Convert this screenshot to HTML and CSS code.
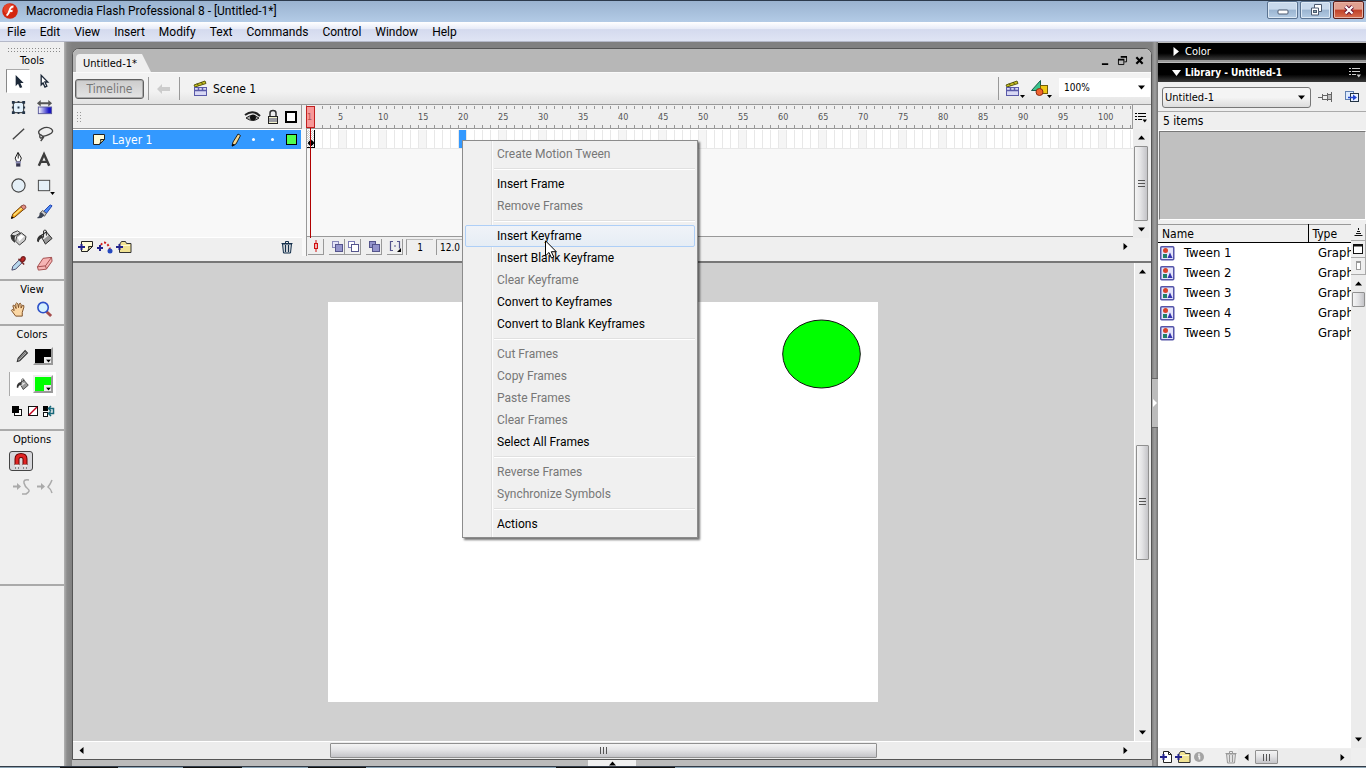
FILE: index.html
```html
<!DOCTYPE html>
<html lang="en">
<head>
    <meta charset="UTF-8">
    <meta name="viewport" content="width=device-width, initial-scale=1.0">
    <title>Macromedia Flash Professional 8 - [Untitled-1*]</title>
    <link rel="stylesheet" href="styles.css">
</head>

<body>
    <!-- Shared icons -->
    <svg class="defs" aria-hidden="true">
        <symbol id="up" viewBox="0 0 7 5"><path d="M0 4.5L3.5 0.5 7 4.5z"/></symbol>
        <symbol id="down" viewBox="0 0 7 5"><path d="M0 0.5L3.5 4.5 7 0.5z"/></symbol>
        <symbol id="left" viewBox="0 0 5 7"><path d="M4.5 0L0.5 3.5 4.5 7z"/></symbol>
        <symbol id="right" viewBox="0 0 5 7"><path d="M0.5 0L4.5 3.5 0.5 7z"/></symbol>
        <symbol id="scene" viewBox="0 0 16 17">
            <path d="M1 5L12 1l1 2.500L2 7z" fill="#c9c220" stroke="#5c5a10"/>
            <path d="M4 3.500l1.500 2M8 2l1.500 2" stroke="#4c4a10"/>
            <rect x="1.500" y="7.500" width="12" height="8" fill="#d8d8f4" stroke="#5a5aa8"/>
            <path d="M1 10.500h13M5.500 8v2M9.500 8v2" stroke="#5a5aa8" stroke-width="1.500"/>
        </symbol>
        <symbol id="list-menu" viewBox="0 0 12 11">
            <path d="M0 1.500h2M0 4.500h2M0 7.500h2M3 1.500h8M3 4.500h8M3 7.500h4" stroke="currentColor"/>
            <path d="M7.500 7.500h4.500l-2.200 3z" fill="currentColor"/>
        </symbol>
        <symbol id="page" viewBox="0 0 14 13">
            <path d="M1.500 1.500h11v5l-5 5h-6z" fill="#fffbd8" stroke="#222"/>
            <path d="M12.500 6.500h-4q1 2-1 5z" fill="#d8d090" stroke="#222"/>
        </symbol>
        <symbol id="folder" viewBox="0 0 16 14">
            <path d="M3.500 4.500l2-3h4l1 2h4.500v9H3.500z" fill="#f1e394" stroke="#333"/>
            <path d="M4 5.500h10" stroke="#fffbd0"/>
            <path d="M0 7h7M3.500 4v6" stroke="#23238c" stroke-width="2"/>
        </symbol>
        <symbol id="trash" viewBox="0 0 12 14">
            <path d="M0.500 3.500h11M4.500 3V1.500h3V3" fill="none" stroke="currentColor"/>
            <path d="M1.500 4h9l-1 9h-7z" fill="currentColor" fill-opacity=".15" stroke="currentColor"/>
            <path d="M4.500 5v7M7.500 5v7" stroke="currentColor"/>
        </symbol>
        <symbol id="bucket" viewBox="0 0 18 18">
            <path d="M5 7L11 3l6 7-7 6z" fill="#999" stroke="#222"/>
            <path d="M6 8l5-4 2 3-5 4z" fill="#eee"/>
            <path d="M8 9V2q1.500-2 3 0v5" fill="none" stroke="#222"/>
            <path d="M6 6Q1 7 1 13l2 1q0-4 5-5z" fill="#333"/>
        </symbol>
        <symbol id="graphic" viewBox="0 0 15 15">
            <rect x="0.750" y="0.750" width="13" height="13" rx="1" fill="#e4e4fa" stroke="#5454a8" stroke-width="1.500"/>
            <circle cx="5.500" cy="4.500" r="2.500" fill="#d8432a"/>
            <rect x="3" y="8" width="4" height="4" fill="#20806a"/>
            <path d="M7.500 12L10 6.500l2.500 5.500z" fill="#3434ac"/>
        </symbol>
    </svg>

    <header class="titlebar">
        <svg class="logo" viewBox="0 0 16 16" width="16" height="16">
            <circle cx="8" cy="8" r="7.800" fill="#d3260f"/>
            <circle cx="6.500" cy="6" r="5" fill="#f0563b" opacity=".6"/>
            <path d="M11.500 3.500Q8.500 3.500 7.500 7.500T4.500 12.500M7.500 8h3" fill="none" stroke="#fff" stroke-width="1.800"/>
        </svg>
        <h1>Macromedia Flash Professional 8 - [Untitled-1*]</h1>
        <div class="window-buttons">
            <button type="button" aria-label="Minimize"><svg viewBox="0 0 12 12" width="12" height="12"><rect x="1" y="6" width="10" height="4" rx="1" fill="#fff" stroke="#4d5b70"/></svg></button>
            <button type="button" aria-label="Restore"><svg viewBox="0 0 12 12" width="12" height="12"><path d="M4.500 0.500h7v7h-3v3.500h-7v-7h3z" fill="#fff" stroke="#4d5b70"/><path d="M4.500 4h4v3.500" fill="none" stroke="#4d5b70"/><rect x="3.500" y="6.500" width="3" height="2" fill="#8aa" stroke="#4d5b70"/></svg></button>
            <button type="button" class="close" aria-label="Close"><svg viewBox="0 0 12 12" width="12" height="12"><path d="M2.500 2.500l7 7M9.500 2.500l-7 7" stroke="#613" stroke-width="4"/><path d="M2.500 2.500l7 7M9.500 2.500l-7 7" stroke="#fff" stroke-width="2.200"/></svg></button>
        </div>
    </header>

    <nav class="menubar">
        <ul>
            <li><a href="#file">File</a></li>
            <li><a href="#edit">Edit</a></li>
            <li><a href="#view">View</a></li>
            <li><a href="#insert">Insert</a></li>
            <li><a href="#modify">Modify</a></li>
            <li><a href="#text">Text</a></li>
            <li><a href="#commands">Commands</a></li>
            <li><a href="#control">Control</a></li>
            <li><a href="#window">Window</a></li>
            <li><a href="#help">Help</a></li>
        </ul>
    </nav>

    <div class="workspace">
        <!-- Tools -->
        <aside class="tools">
            <div class="grip"></div>
            <section class="tool-section main-tools">
                <h2>Tools</h2>
                <div class="tool-grid">
                    <button type="button" class="selected" aria-label="Selection"><svg viewBox="0 0 18 18"><path d="M6 2v12l2.500-2.500 2 4.500 2.500-1-2-4.500h3.500z" fill="#1c2838"/></svg></button>
                    <button type="button" aria-label="Subselection"><svg viewBox="0 0 18 18"><path d="M5.500 2.500v10l2-2 2 4.500 2-1-2-4.500h3z" fill="#fff" stroke="#1c2838" stroke-width="1.400"/></svg></button>
                    <button type="button" aria-label="Free Transform"><svg viewBox="0 0 18 18"><rect x="3.500" y="3.500" width="11" height="11" fill="#e2f1fc" stroke="#222"/><path d="M2 2h3v3H2zM13 2h3v3h-3zM2 13h3v3H2zM13 13h3v3h-3zM8 2h2v2H8zM8 14h2v2H8zM2 8h2v2H2zM14 8h2v2h-2zM8 8h2v2H8z" fill="#24364a"/></svg></button>
                    <button type="button" aria-label="Gradient Transform"><svg viewBox="0 0 18 18"><defs><linearGradient id="blue"><stop offset="0" stop-color="#fff"/><stop offset=".8" stop-color="#1a16c4"/></linearGradient></defs><rect x="2.500" y="8.500" width="14" height="7" fill="url(#blue)" stroke="#5a5a9c"/><path d="M1 4.500l4-3.500v2.500h8V1l4 3.500L13 8V5.500H5V8z" fill="#555"/></svg></button>
                    <button type="button" aria-label="Line"><svg viewBox="0 0 18 18"><path d="M3 15L15 4" stroke="#444" stroke-width="1.500"/></svg></button>
                    <button type="button" aria-label="Lasso"><svg viewBox="0 0 18 18"><path d="M5 11Q0 7 6 4t10 0-2 6-8 1-2 1 3 1-2 4" fill="none" stroke="#444" stroke-width="1.500"/></svg></button>
                    <button type="button" aria-label="Pen"><svg viewBox="0 0 18 18"><path d="M8.500 1.500L5.500 7.500l1.500 4h3.500l1.500-4z" fill="#fff" stroke="#111"/><path d="M8.700 2v6" stroke="#111"/><rect x="6" y="11" width="5.500" height="2" fill="#8b8bb8"/><path d="M6.500 13h4.500v3.500H6.500z" fill="#34344e"/></svg></button>
                    <button type="button" aria-label="Text"><svg viewBox="0 0 18 18"><path d="M3 15.500L8.500 3.500l5.500 12M5 11.500h7" fill="none" stroke="#3d3d3d" stroke-width="2.600"/></svg></button>
                    <button type="button" aria-label="Oval"><svg viewBox="0 0 18 18"><circle cx="9" cy="9" r="7" fill="#e4eff7" stroke="#444" stroke-width="1.200"/></svg></button>
                    <button type="button" aria-label="Rectangle"><svg viewBox="0 0 18 18"><rect x="2.500" y="3.500" width="12" height="11" fill="#e4eff7" stroke="#444"/><path d="M15 16h5l-2.500 3z"/></svg></button>
                    <button type="button" aria-label="Pencil"><svg viewBox="0 0 18 18"><path d="M1.500 16l1.500-4.500L12.500 3l3 3L5 15z" fill="#f3a81c" stroke="#6a3a0c"/><path d="M4 13l9-8" stroke="#ffe480" stroke-width="1.500"/><path d="M11.500 4l3 3L17 5q0-3-3-3z" fill="#e09080" stroke="#844"/><path d="M1 17l1-3 2 2z"/></svg></button>
                    <button type="button" aria-label="Brush"><svg viewBox="0 0 18 18"><path d="M8 9l7-7 2 1-6 8z" fill="#4c8cf4" stroke="#1c3cac"/><path d="M7 8l4 3-2 3-5-3z" fill="#ccc" stroke="#555"/><path d="M6 10l3 3q-3 4-8 3 3-2 3-5z" fill="#3c4454"/></svg></button>
                    <button type="button" aria-label="Ink Bottle"><svg viewBox="0 0 18 18"><path d="M7 8l5-4 5 4-1 4-6 5-4-4z" fill="#ccc" stroke="#333"/><path d="M8 9l4-3 3 2-5 5z" fill="#fff"/><path d="M3 4l5-2 3 2-5 3q-3 1-1 7-4-2-4-7z" fill="#ddd" stroke="#333"/><path d="M1 6q0 5 4 8-1-5 1-7z" fill="#333"/></svg></button>
                    <button type="button" aria-label="Paint Bucket"><svg viewBox="0 0 18 18"><use href="#bucket"/></svg></button>
                    <button type="button" aria-label="Eyedropper"><svg viewBox="0 0 18 18"><path d="M2 16l1-4 7-7 3 3-7 7z" fill="#b8d8ee" stroke="#446"/><path d="M9 4l6 6M11 6q1-5 4-4 3 2-2 6z" fill="#c42424" stroke="#722" stroke-width="1.500"/></svg></button>
                    <button type="button" aria-label="Eraser"><svg viewBox="0 0 18 18"><path d="M1.500 12.500l6-9 9-1 .5 4-6 8.500-8.500 1z" fill="#f6b4b4" stroke="#a04a4a"/><path d="M1.500 12.500l8.500-1 6.500-9M10 11.500l1 3" fill="none" stroke="#a04a4a"/></svg></button>
                </div>
            </section>
            <section class="tool-section view-tools">
                <h2>View</h2>
                <div class="tool-grid">
                    <button type="button" aria-label="Hand"><svg viewBox="0 0 18 18"><path d="M6 16L1.500 10q0-2 3 0L3 5q1-2 2.500 1l1 2-.5-5q1-2 2.300 0l.7 4 .7-4q1.500-1.500 2 .5v4l1.500-3q2-.5 1.500 2L13 12v4z" fill="#fbd7a4" stroke="#7a4a20"/></svg></button>
                    <button type="button" aria-label="Zoom"><svg viewBox="0 0 18 18"><path d="M11 11l5 5" stroke="#a44c4c" stroke-width="3"/><circle cx="7.500" cy="7" r="5.500" fill="#d4f0ff" stroke="#2c50c8" stroke-width="1.700"/></svg></button>
                </div>
            </section>
            <section class="tool-section colors">
                <h2>Colors</h2>
                <div class="color-row">
                    <svg viewBox="0 0 18 18" width="14" height="14"><path d="M3 16l1-4 9-10 3 3L6 15z" fill="#bbb" stroke="#333" stroke-width="1.400"/><path d="M5 13l9-9" stroke="#666"/></svg>
                    <button type="button" class="swatch black" aria-label="Stroke color"><svg viewBox="0 0 7 5" width="5" height="4"><use href="#down"/></svg></button>
                </div>
                <div class="color-row active">
                    <svg viewBox="0 0 18 18" width="13" height="13"><use href="#bucket"/></svg>
                    <button type="button" class="swatch green" aria-label="Fill color"><svg viewBox="0 0 7 5" width="5" height="4"><use href="#down"/></svg></button>
                </div>
                <div class="color-actions">
                    <button type="button" aria-label="Black and white"><svg viewBox="0 0 12 12"><rect x="3.500" y="4.500" width="7" height="6" fill="#fff" stroke="#111"/><rect x="1" y="1" width="7" height="7"/></svg></button>
                    <button type="button" aria-label="No color"><svg viewBox="0 0 12 12"><rect x="1.500" y="1.500" width="9" height="9" fill="#fff" stroke="#111"/><path d="M2 10l8-8" stroke="#c4001c" stroke-width="1.500"/></svg></button>
                    <button type="button" aria-label="Swap colors"><svg viewBox="0 0 12 12"><rect x="0" y="1" width="5" height="5"/><rect x="0.500" y="7.500" width="4" height="4" fill="#fff" stroke="#111"/><path d="M6 3.500h4.500v5H6M8 1L5.500 3.500 8 6M8 6L5.500 8.500 8 11" fill="none" stroke="#18687a" stroke-width="1.500"/></svg></button>
                </div>
            </section>
            <section class="tool-section options">
                <h2>Options</h2>
                <button type="button" class="magnet" aria-label="Snap to Objects"><svg viewBox="0 0 16 16" width="16" height="16"><path d="M4 12V6q0-3.500 4-3.500T12 6v6" fill="none" stroke="#600" stroke-width="5"/><path d="M4 11V6q0-3.500 4-3.500T12 6v5" fill="none" stroke="#e02424" stroke-width="3"/><path d="M2 12.500h4M10 12.500h4" stroke="#eee" stroke-width="2"/><path d="M2 15h1M5 15h1M10 15h1M13 15h1" stroke="#333"/></svg></button>
                <div class="option-icons">
                    <svg viewBox="0 0 18 18" width="18" height="18"><path d="M0 8.500h5" stroke="#aaa" stroke-width="2"/><path d="M4 5l4 3.500L4 12z" fill="#aaa"/><path d="M16 2q-6-1-5 3t4 6-2 5H9" fill="none" stroke="#aaa" stroke-width="1.500"/></svg>
                    <svg viewBox="0 0 18 18" width="18" height="18"><path d="M0 8.500h5" stroke="#aaa" stroke-width="2"/><path d="M4 5l4 3.500L4 12z" fill="#aaa"/><path d="M15 2q-1 3-4 7 3 2 4 6" fill="none" stroke="#aaa" stroke-width="1.500"/></svg>
                </div>
            </section>
            <div class="tools-rest"></div>
        </aside>

        <!-- Document window -->
        <main class="center">
            <div class="document">
                <div class="tabbar">
                    <div class="tab">Untitled-1*</div>
                    <div class="doc-buttons">
                        <button type="button" aria-label="Minimize document"><svg viewBox="0 0 10 10"><path d="M1 9h7" stroke="#000" stroke-width="2"/></svg></button>
                        <button type="button" aria-label="Restore document"><svg viewBox="0 0 10 10"><path d="M3 1h7M0 4h7" stroke="#000" stroke-width="2"/><path d="M9.500 1v5.500H7M0.500 4v5.500h6V4" fill="none" stroke="#000"/></svg></button>
                        <button type="button" aria-label="Close document"><svg viewBox="0 0 10 10"><path d="M1.500 1.500l7 7M8.500 1.500l-7 7" stroke="#000" stroke-width="2.400"/></svg></button>
                    </div>
                </div>

                <div class="editbar">
                    <button type="button" class="timeline-toggle">Timeline</button>
                    <span class="divider"></span>
                    <button type="button" class="back" aria-label="Back"><svg viewBox="0 0 13 10" width="13" height="10"><path d="M0 5l5-5v3h8v4H5v3z" fill="#ccc"/></svg></button>
                    <span class="divider"></span>
                    <svg class="scene-icon" width="16" height="17"><use href="#scene"/></svg>
                    <span class="scene-name">Scene 1</span>
                    <div class="edit-right">
                        <span class="divider"></span>
                        <button type="button" aria-label="Edit Scene"><svg viewBox="0 0 20 18" width="20" height="18"><use href="#scene" width="16" height="17"/><path d="M15 15h5l-2.500 3z"/></svg></button>
                        <button type="button" aria-label="Edit Symbols"><svg viewBox="0 0 22 18" width="22" height="18"><path d="M0.500 10.500L9.500 0.500v10z" fill="#3cc48c" stroke="#145c4c"/><rect x="9.500" y="5.500" width="7" height="8" fill="#f0c814" stroke="#705c0c"/><circle cx="8.500" cy="12" r="3.500" fill="#f06430" stroke="#8c2c10"/><path d="M16 15h5l-2.500 3z"/></svg></button>
                        <div class="zoom-box">
                            <select aria-label="Zoom"><option>100%</option></select>
                            <svg width="7" height="5"><use href="#down"/></svg>
                        </div>
                    </div>
                </div>

                <!-- Timeline -->
                <section class="timeline">
                    <div class="layers">
                        <div class="layers-head">
                            <span class="dots"></span>
                            <svg viewBox="0 0 16 12" width="16" height="12"><path d="M0 4Q8-2 15 5" fill="none" stroke="#222" stroke-width="2"/><path d="M1 7q6-5 13 0-6 5-13 0z" fill="#aaa" stroke="#222"/><circle cx="8" cy="6.500" r="3" fill="#111"/></svg>
                            <svg viewBox="0 0 12 14" width="12" height="14"><path d="M3 7V3q0-2.500 3-2.500T9 3v4" fill="none" stroke="#333" stroke-width="1.500"/><rect x="1.500" y="6.500" width="9" height="7" fill="#f2f2cc" stroke="#222"/><path d="M2 9h8M2 11h8" stroke="#447"/></svg>
                            <svg viewBox="0 0 12 12" width="12" height="12"><rect x="1" y="1" width="10" height="10" fill="#fff" stroke="#000" stroke-width="2"/></svg>
                        </div>
                        <div class="layer">
                            <svg width="14" height="13"><use href="#page"/></svg>
                            <span class="layer-name">Layer 1</span>
                            <svg viewBox="0 0 10 14" width="10" height="14"><path d="M1 13l1-4 5-8 2.500 1.500L5 11z" fill="#f4d890" stroke="#222"/><path d="M1 13.500l.5-3L4 12z"/></svg>
                            <span class="dot"></span>
                            <span class="dot"></span>
                            <span class="outline"></span>
                        </div>
                        <div class="layers-foot">
                            <button type="button" aria-label="Insert Layer"><svg viewBox="0 0 16 14" width="16" height="14"><use href="#page" x="2" width="14" height="13"/><path d="M0 7h7M3.500 4v6" stroke="#23238c" stroke-width="2"/></svg></button>
                            <button type="button" aria-label="Add Motion Guide"><svg viewBox="0 0 16 14" width="16" height="14"><path d="M4 5q3-5 7 0l2 4" fill="none" stroke="#d02020" stroke-width="2" stroke-dasharray="2 2"/><path d="M0 8h6M3 5v6" stroke="#23238c" stroke-width="2"/><circle cx="13" cy="11" r="2.500" fill="#2448c0"/></svg></button>
                            <button type="button" aria-label="Insert Layer Folder"><svg width="16" height="14"><use href="#folder"/></svg></button>
                            <button type="button" class="delete" aria-label="Delete Layer"><svg width="12" height="14"><use href="#trash"/></svg></button>
                        </div>
                    </div>

                    <div class="frames">
                        <div class="ruler">
                            <span class="first">1</span>
                            <span>5</span><span>10</span><span>15</span><span>20</span><span>25</span>
                            <span>30</span><span>35</span><span>40</span><span>45</span><span>50</span>
                            <span>55</span><span>60</span><span>65</span><span>70</span><span>75</span>
                            <span>80</span><span>85</span><span>90</span><span>95</span><span>100</span>
                            <div class="playhead"></div>
                        </div>
                        <div class="frame-row">
                            <div class="keyframe"></div>
                            <div class="frame-selected"></div>
                        </div>
                        <div class="frame-space"></div>
                        <div class="frames-foot">
                            <button type="button" aria-label="Center Frame"><svg viewBox="0 0 12 12"><path d="M6 0v12" stroke="#d01010"/><rect x="4.500" y="3.500" width="3" height="5" fill="#f4b0b0" stroke="#d01010"/></svg></button>
                            <button type="button" class="gap" aria-label="Onion Skin"><svg viewBox="0 0 12 12"><rect x="1.500" y="1.500" width="6" height="6" fill="#e4e4f8" stroke="#8888b8"/><rect x="4.500" y="4.500" width="7" height="7" fill="#9494cc" stroke="#55558c"/></svg></button>
                            <button type="button" aria-label="Onion Skin Outlines"><svg viewBox="0 0 12 12"><rect x="1.500" y="1.500" width="6" height="6" fill="#fff" stroke="#7878b4"/><rect x="4.500" y="4.500" width="7" height="7" fill="#fff" stroke="#55558c"/></svg></button>
                            <button type="button" class="gap" aria-label="Edit Multiple Frames"><svg viewBox="0 0 12 12"><rect x="1.500" y="1.500" width="6" height="6" fill="#9494cc" stroke="#55558c"/><rect x="4.500" y="4.500" width="7" height="7" fill="#9494cc" stroke="#55558c"/></svg></button>
                            <button type="button" class="gap" aria-label="Modify Onion Markers"><svg viewBox="0 0 12 12"><path d="M4 1.500H1.500v9H4M8 1.500h2.500v7M5 6h2" fill="none" stroke="#55558c" stroke-width="1.200"/><path d="M8 12h4V8z"/></svg></button>
                            <span class="field current">1</span>
                            <span class="field">12.0</span>
                            <button type="button" class="foot-arrow" aria-label="Scroll frames right"><svg width="5" height="7"><use href="#right"/></svg></button>
                        </div>
                    </div>

                    <div class="timeline-side">
                        <button type="button" class="frame-view" aria-label="Frame View"><svg width="12" height="11"><use href="#list-menu"/></svg></button>
                        <div class="vscroll">
                            <button type="button" aria-label="Scroll layers up"><svg width="7" height="5"><use href="#up"/></svg></button>
                            <div class="thumb full"></div>
                            <button type="button" aria-label="Scroll layers down"><svg width="7" height="5"><use href="#down"/></svg></button>
                        </div>
                    </div>
                </section>

                <!-- Stage -->
                <section class="stage-area">
                    <div class="pasteboard">
                        <div class="stage">
                            <svg viewBox="0 0 550 400" width="550" height="400"><ellipse cx="493.500" cy="52" rx="38.800" ry="34" fill="#0f0" stroke="#111"/></svg>
                        </div>
                    </div>
                    <div class="vscroll stage-v">
                        <button type="button" aria-label="Scroll up"><svg width="7" height="5"><use href="#up"/></svg></button>
                        <div class="before"></div>
                        <div class="thumb"></div>
                        <div class="after"></div>
                        <button type="button" aria-label="Scroll down"><svg width="7" height="5"><use href="#down"/></svg></button>
                    </div>
                    <div class="hscroll stage-h">
                        <button type="button" aria-label="Scroll left"><svg width="5" height="7"><use href="#left"/></svg></button>
                        <div class="before"></div>
                        <div class="thumb"></div>
                        <div class="after"></div>
                        <button type="button" aria-label="Scroll right"><svg width="5" height="7"><use href="#right"/></svg></button>
                    </div>
                </section>
            </div>
            <div class="bottom-gutter">
                <button type="button" aria-label="Show bottom panels"><svg width="7" height="5"><use href="#up"/></svg></button>
            </div>
        </main>

        <div class="splitter">
            <button type="button" aria-label="Hide side panels"><svg viewBox="0 0 5 8" width="5" height="8"><path d="M0 0l4 4-4 4z"/></svg></button>
        </div>

        <!-- Panels -->
        <aside class="panels">
            <button type="button" class="panel-head"><svg width="6" height="9" viewBox="0 0 6 9"><path d="M0.500 0l5.500 4.500-5.500 4.500z"/></svg>Color</button>
            <div class="panel-head open">
                <button type="button"><svg width="9" height="6" viewBox="0 0 9 6"><path d="M0 0h9L4.500 6z"/></svg>Library - Untitled-1</button>
                <svg class="head-menu" width="12" height="11"><use href="#list-menu"/></svg>
            </div>
            <div class="library-pick">
                <div class="pick-box">
                    <select aria-label="Library document"><option>Untitled-1</option></select>
                    <svg width="7" height="5"><use href="#down"/></svg>
                </div>
                <button type="button" aria-label="Pin current library"><svg viewBox="0 0 14 12" width="14" height="12"><path d="M0 6.500h4M4.500 3v6M13.500 1v10M9.500 2v8M5 4.500h4M5 8.500h4M10 3.500h3M10 8.500h3" fill="none" stroke="#666"/><rect x="10" y="4" width="3" height="4" fill="#bbb"/></svg></button>
                <button type="button" aria-label="New library panel"><svg viewBox="0 0 14 12" width="14" height="12"><rect x="0.500" y="0.500" width="8" height="8" fill="#dceaff" stroke="#6080b0"/><rect x="5.500" y="2.500" width="8" height="8" fill="#e8f0ff" stroke="#234"/><path d="M3 6.500h7" stroke="#2044d0" stroke-width="1.500"/><path d="M8 3.500l4 3-4 3z" fill="#2044d0"/></svg></button>
            </div>
            <p class="item-count">5 items</p>
            <div class="preview"></div>
            <div class="library">
                <div class="library-list">
                    <table>
                        <thead>
                            <tr><th class="name">Name</th><th>Type</th></tr>
                        </thead>
                        <tbody>
                            <tr><td><svg width="15" height="15"><use href="#graphic"/></svg>Tween 1</td><td>Graph</td></tr>
                            <tr><td><svg width="15" height="15"><use href="#graphic"/></svg>Tween 2</td><td>Graph</td></tr>
                            <tr><td><svg width="15" height="15"><use href="#graphic"/></svg>Tween 3</td><td>Graph</td></tr>
                            <tr><td><svg width="15" height="15"><use href="#graphic"/></svg>Tween 4</td><td>Graph</td></tr>
                            <tr><td><svg width="15" height="15"><use href="#graphic"/></svg>Tween 5</td><td>Graph</td></tr>
                        </tbody>
                    </table>
                </div>
                <div class="library-side">
                    <button type="button" class="side-button" aria-label="Sort order"><svg viewBox="0 0 9 8" width="9" height="8"><path d="M4.500 0v2M3 3.500h3M2 5.500h5M0.500 7.500h8" stroke="#111"/></svg></button>
                    <button type="button" class="side-button" aria-label="Wide view"><svg viewBox="0 0 10 10" width="10" height="10"><rect x="0.500" y="0.500" width="9" height="9" fill="#fff" stroke="#111"/><path d="M0 1.500h10" stroke="#111" stroke-width="2"/></svg></button>
                    <button type="button" class="side-button" aria-label="Narrow view"><svg viewBox="0 0 10 10" width="10" height="10"><rect x="3.500" y="0.500" width="4" height="8" fill="#fff" stroke="#999"/><path d="M3 1.500h5" stroke="#999"/></svg></button>
                    <div class="vscroll">
                        <button type="button" aria-label="Scroll list up"><svg width="7" height="5"><use href="#up"/></svg></button>
                        <div class="thumb small"></div>
                        <div class="after"></div>
                        <button type="button" aria-label="Scroll list down"><svg width="7" height="5"><use href="#down"/></svg></button>
                    </div>
                </div>
            </div>
            <div class="library-foot">
                <button type="button" aria-label="New Symbol"><svg viewBox="0 0 12 14" width="12" height="14"><path d="M3.500 1.500h5l3 3v8h-8z" fill="#fff" stroke="#222"/><path d="M8.500 1.500v3h3" fill="none" stroke="#222"/><path d="M0 7h7M3.500 4v6" stroke="#23238c" stroke-width="2"/></svg></button>
                <button type="button" aria-label="New Folder"><svg width="16" height="14"><use href="#folder"/></svg></button>
                <button type="button" aria-label="Properties"><svg viewBox="0 0 10 12" width="10" height="12"><circle cx="5" cy="6" r="5" fill="#a4a4a4"/><path d="M5 2.500v2M4 5.500h1.500v3" fill="none" stroke="#eee" stroke-width="1.500"/></svg></button>
                <button type="button" class="delete" aria-label="Delete"><svg width="12" height="14"><use href="#trash"/></svg></button>
                <div class="hscroll">
                    <button type="button" aria-label="Scroll list left"><svg width="5" height="7"><use href="#left"/></svg></button>
                    <div class="thumb small"></div>
                    <div class="after"></div>
                    <button type="button" aria-label="Scroll list right"><svg width="5" height="7"><use href="#right"/></svg></button>
                </div>
            </div>
        </aside>
    </div>

    <div class="taskbar"></div>

    <!-- Frame context menu -->
    <div class="context-menu" role="menu">
        <button type="button" role="menuitem" disabled>Create Motion Tween</button>
        <hr>
        <button type="button" role="menuitem">Insert Frame</button>
        <button type="button" role="menuitem" disabled>Remove Frames</button>
        <hr>
        <button type="button" role="menuitem" class="hover">Insert Keyframe</button>
        <button type="button" role="menuitem">Insert Blank Keyframe</button>
        <button type="button" role="menuitem" disabled>Clear Keyframe</button>
        <button type="button" role="menuitem">Convert to Keyframes</button>
        <button type="button" role="menuitem">Convert to Blank Keyframes</button>
        <hr>
        <button type="button" role="menuitem" disabled>Cut Frames</button>
        <button type="button" role="menuitem" disabled>Copy Frames</button>
        <button type="button" role="menuitem" disabled>Paste Frames</button>
        <button type="button" role="menuitem" disabled>Clear Frames</button>
        <button type="button" role="menuitem">Select All Frames</button>
        <hr>
        <button type="button" role="menuitem" disabled>Reverse Frames</button>
        <button type="button" role="menuitem" disabled>Synchronize Symbols</button>
        <hr>
        <button type="button" role="menuitem">Actions</button>
    </div>
    <svg class="cursor" viewBox="0 0 12 19" width="12" height="19"><path d="M0.500 0.800v15l3.500-3.300 2.500 5.500 2.300-1-2.500-5.300h5z" fill="#fff" stroke="#000"/></svg>
</body>
</html>
```

FILE: styles.css
```css
* {
    box-sizing: border-box;
}

body {
    margin: 0;
    height: 100vh;
    display: flex;
    flex-direction: column;
    overflow: hidden;
    background: #808080;
    color: #000;
    font-family: "DejaVu Sans Condensed", "DejaVu Sans", sans-serif;
    font-size: 12px;
}

button, select {
    font: inherit;
    color: inherit;
    margin: 0;
    padding: 0;
    border: none;
    border-radius: 0;
    background: none;
}

svg {
    display: block;
    flex: none;
    overflow: visible;
}

.defs {
    position: absolute;
    width: 0;
    height: 0;
}

h1, h2, p, ul {
    margin: 0;
    padding: 0;
    font-weight: normal;
}

/* Title bar */
.titlebar {
    display: flex;
    align-items: center;
    flex: none;
    height: 22px;
    padding: 0 2px 2px;
    border-top: 1px solid #2c3a4c;
    background: linear-gradient(#9ab3d0, #b3cbe6);
}

.titlebar h1 {
    flex: 1;
    margin-left: 8px;
    font-family: Roboto, sans-serif;
    font-size: 12px;
}

.window-buttons {
    display: flex;
    align-self: flex-start;
    gap: 2px;
}

.window-buttons button {
    display: flex;
    align-items: center;
    justify-content: center;
    width: 31px;
    height: 18px;
    border: 1px solid #5a7391;
    border-radius: 2px;
    background: linear-gradient(#c8d9ec 45%, #9ab4d0 50%, #b4cce4);
    box-shadow: inset 0 0 0 1px #dce8f4;
}

.window-buttons .close {
    border-color: #5c1f1a;
    background: linear-gradient(#e0a090 45%, #c04028 50%, #d87050);
    box-shadow: inset 0 0 0 1px #e8b4a8;
}

/* Menu bar */
.menubar {
    flex: none;
    height: 20px;
    border-bottom: 1px solid #b4b8c8;
    background: linear-gradient(#fff 0, #e8ecf8 35%, #d4daee 40%, #dfe4f4);
    font-family: Roboto, sans-serif;
}

.menubar ul {
    display: flex;
    list-style-type: none;
    gap: 14px;
    padding-left: 7px;
    line-height: 20px;
}

.menubar a {
    color: #000;
    text-decoration: none;
}

.workspace {
    display: flex;
    flex: 1;
    min-height: 0;
}

/* Tools */
.tools {
    display: flex;
    flex-direction: column;
    flex: none;
    width: 64px;
    padding-top: 5px;
    background: #efefef;
}

.grip {
    height: 5px;
    margin: 0 4px 0 7px;
    background: radial-gradient(circle, #888 0.7px, transparent 1px) 0 0 / 3px 3px;
}

.tool-section {
    padding-bottom: 3px;
    border-bottom: 2px solid #aaa;
}

.tool-section h2 {
    height: 18px;
    font-size: 11px;
    line-height: 18px;
    text-align: center;
}

.main-tools h2 {
    height: 16px;
}

.tool-grid {
    display: grid;
    grid-template-columns: 26px 26px;
    justify-content: center;
}

.tool-grid button {
    display: flex;
    align-items: center;
    justify-content: center;
    width: 24px;
    height: 26px;
}

.tool-grid svg {
    width: 17px;
    height: 17px;
}

.tool-grid .selected {
    align-self: center;
    height: 24px;
    border: 1px solid #fff;
    border-left-color: #888;
    border-top-color: #aaa;
    background: #fff;
}

.view-tools .tool-grid button {
    height: 20px;
}

.view-tools {
    padding-bottom: 5px;
}

.colors {
    padding-bottom: 12px;
}

.color-row {
    display: flex;
    align-items: center;
    justify-content: space-between;
    height: 24px;
    margin: 0 8px 4px 9px;
    padding: 0 3px 0 6px;
}

.color-row.active {
    background: #fff;
    border-left: 1px solid #aaa;
}

.swatch {
    display: flex;
    align-items: flex-end;
    justify-content: flex-end;
    width: 20px;
    height: 18px;
    border: 2px solid #eee;
    border-right-color: #999;
    border-bottom-color: #999;
}

.swatch.black {
    background: #000;
}

.swatch.green {
    background: #0f0;
}

.swatch svg {
    box-sizing: content-box;
    padding: 2px 0 0 2px;
    background: #eee;
}

.color-actions {
    display: flex;
    gap: 4px;
    margin-top: 9px;
    padding-left: 11px;
}

.color-actions svg {
    width: 12px;
    height: 12px;
}

.options {
    padding-bottom: 88px;
}

.magnet {
    display: flex;
    align-items: center;
    justify-content: center;
    width: 24px;
    height: 20px;
    margin: 2px 0 0 9px;
    border: 1px solid #444;
    border-radius: 3px;
    background: #d8d8dc;
}

.option-icons {
    display: flex;
    gap: 6px;
    margin-top: 7px;
    padding-left: 13px;
}

.tools-rest {
    flex: 1;
}

/* Document window */
.center {
    display: flex;
    flex-direction: column;
    flex: 1;
    min-width: 0;
    padding: 6px 0 0 8px;
    background: linear-gradient(90deg, #b4b4b4 0, #8c8c8c 3px, #808080 8px);
}

.document {
    position: relative;
    z-index: 0;
    display: flex;
    flex-direction: column;
    flex: 1;
    min-height: 0;
    border: 1px solid #555;
    border-radius: 7px 7px 0 0;
    background: #efefef;
    overflow: hidden;
}

.tabbar {
    display: flex;
    align-items: flex-end;
    justify-content: space-between;
    flex: none;
    height: 24px;
    padding: 0 7px 0 3px;
    border-bottom: 1px solid #fafafa;
    background: #b7b7b7;
}

.tab {
    height: 18px;
    padding: 0 14px 0 7px;
    border-radius: 4px 0 0 0;
    background: #efefef;
    clip-path: polygon(0 0, 66px 0, 100% 100%, 0 100%);
    font-size: 11px;
    line-height: 20px;
}

.doc-buttons {
    display: flex;
    gap: 8px;
    padding-bottom: 7px;
}

.doc-buttons svg {
    width: 9px;
    height: 9px;
}

.editbar {
    display: flex;
    align-items: center;
    flex: none;
    height: 32px;
    padding-left: 2px;
    border-bottom: 1px solid #999;
    background: linear-gradient(#f2f2f2 60%, #e2e2e2);
}

.timeline-toggle {
    width: 69px;
    height: 20px;
    border: 1px solid #606060;
    border-radius: 3px;
    background: linear-gradient(#ccc, #e4e4e4);
    box-shadow: inset 0 0 0 1px #aaa;
    color: #777;
}

.divider {
    width: 1px;
    height: 23px;
    margin: 0 4px;
    background: #999;
}

.back {
    margin: 0 5px 0 4px;
}

.scene-icon {
    margin: 0 4px 0 9px;
}

.edit-right {
    display: flex;
    align-items: center;
    gap: 6px;
    margin-left: auto;
    padding-right: 1px;
}

.edit-right .divider {
    margin: 0;
}

.zoom-box, .pick-box {
    position: relative;
    display: flex;
    align-items: center;
}

.zoom-box select, .pick-box select {
    appearance: none;
    width: 100%;
    height: 100%;
    padding-left: 5px;
}

.zoom-box svg, .pick-box svg {
    position: absolute;
    right: 5px;
    pointer-events: none;
}

.zoom-box {
    width: 91px;
    height: 19px;
    margin-bottom: 3px;
    background: #fff;
    font-size: 10px;
}

/* Timeline */
.timeline {
    position: relative;
    z-index: 0;
    display: grid;
    grid-template-columns: 234px 1fr 18px;
    flex: none;
    height: 158px;
    border-bottom: 2px solid #777;
}

.layers {
    display: flex;
    flex-direction: column;
    margin-bottom: 5px;
    padding-right: 4px;
    border-right: 1px solid #999;
    background: linear-gradient(#efefef 24px, #f8f8f8 24px);
}

.layers-head {
    display: flex;
    align-items: center;
    justify-content: flex-end;
    gap: 6px;
    height: 24px;
    padding: 0 4px 0 3px;
    border-bottom: 1px solid #999;
    border-right: 1px solid #999;
}

.dots {
    width: 6px;
    height: 11px;
    margin-right: auto;
    background: radial-gradient(circle, #999 0.7px, transparent 1px) 0 0 / 3px 3px;
}

.layer {
    display: flex;
    align-items: center;
    height: 20px;
    margin-right: 1px;
    padding: 0 4px 0 19px;
    border-top: 1px solid #fff;
    background: #3399ff;
    color: #fff;
}

.layer-name {
    flex: 1;
    margin-left: 6px;
}

.dot {
    width: 3px;
    height: 3px;
    margin-left: 11px;
    border-radius: 50%;
    background: #fff;
}

.dot + .dot {
    margin-left: 16px;
}

.outline {
    width: 11px;
    height: 11px;
    margin-left: 12px;
    border: 1px solid #000;
    background: #4fff4f;
}

.layers-foot {
    display: flex;
    align-items: center;
    gap: 3px;
    height: 19px;
    margin-top: auto;
    padding: 0 9px 0 5px;
    border-top: 1px solid #fff;
    background: #efefef;
}

.layers-foot .delete {
    margin-left: auto;
    color: #14304c;
}

.frames {
    display: flex;
    flex-direction: column;
    min-width: 0;
    margin-bottom: 5px;
}

.ruler {
    position: relative;
    display: flex;
    align-items: center;
    height: 24px;
    border-right: 1px solid #999;
    border-bottom: 1px solid #999;
    background:
        linear-gradient(90deg, transparent 7px, #999 7px) 0 1px / 8px 3px repeat-x,
        linear-gradient(90deg, transparent 7px, #999 7px) 0 20px / 8px 3px repeat-x;
    color: #555;
    font-size: 9px;
}

.ruler span {
    flex: none;
    width: 40px;
}

.ruler .first {
    width: 31px;
}

/* playhead drawn across the ruler and down the frames */
.playhead {
    position: absolute;
    left: -1px;
    top: 1px;
    width: 9px;
    height: 22px;
    border: 1px solid #c02020;
    background: rgba(255, 80, 80, 0.55);
}

.playhead::after {
    content: "";
    position: absolute;
    left: 3px;
    top: 21px;
    width: 1px;
    height: 110px;
    background: #b00000;
}

.frame-row {
    position: relative;
    z-index: -1;
    display: flex;
    flex: none;
    height: 20px;
    border-top: 1px solid #fff;
    border-bottom: 1px solid #e8e8e8;
    background:
        linear-gradient(90deg, transparent 7px, #e8e8e8 7px) 0 0 / 8px 100%,
        linear-gradient(90deg, transparent 32px, #f5f5f5 32px) 0 0 / 40px 100%,
        #fff;
}

.keyframe {
    width: 8px;
    border: 1px solid #000;
    border-left: none;
    border-top: none;
    background:
        radial-gradient(circle at 4px 13px, #000 2.5px, transparent 3px),
        repeating-conic-gradient(#ccc 0 25%, #fff 0 50%) 0 0 / 2px 2px;
}

.frame-selected {
    width: 7px;
    margin-left: 144px;
    background: #3399ff;
}

.frame-space {
    position: relative;
    z-index: -1;
    flex: 1;
    background: #f8f8f8;
}

.frames-foot {
    display: flex;
    align-items: center;
    height: 20px;
    padding-left: 1px;
    border-top: 1px solid #999;
}

.frames-foot button {
    display: flex;
    align-items: center;
    justify-content: center;
    width: 16px;
    height: 16px;
    border-right: 1px solid #999;
    border-bottom: 1px solid #999;
}

.frames-foot button svg {
    width: 12px;
    height: 12px;
}

.frames-foot .gap {
    margin-left: 5px;
}

.field {
    width: 27px;
    height: 16px;
    margin-left: 3px;
    padding-left: 3px;
    border-left: 1px solid #999;
    border-top: 1px solid #bbb;
    font-size: 10px;
    line-height: 15px;
}

.field.current {
    padding: 0;
    text-align: center;
}

.frames-foot .foot-arrow {
    margin-left: auto;
    border: none;
}

.frames-foot .foot-arrow svg {
    width: 5px;
    height: 7px;
}

.timeline-side {
    display: flex;
    flex-direction: column;
    padding: 0 2px 23px 0;
}

.frame-view {
    display: flex;
    align-items: center;
    justify-content: center;
    height: 24px;
}

/* Scroll bars */
.vscroll, .hscroll {
    display: flex;
    flex: 1;
    min-height: 0;
    background: #ececec;
}

.vscroll {
    flex-direction: column;
}

.vscroll button, .hscroll button {
    display: flex;
    flex: none;
    align-items: center;
    justify-content: center;
}

.vscroll button {
    height: 17px;
}

.hscroll button {
    width: 17px;
}

.thumb {
    display: flex;
    align-items: center;
    justify-content: center;
    border: 1px solid #909090;
    border-radius: 1px;
}

.vscroll .thumb {
    margin: 0 1px;
    background: linear-gradient(90deg, #f4f4f4, #e4e4e6 45%, #c4c4c8);
}

.hscroll .thumb {
    margin: 1px 0;
    background: linear-gradient(#f4f4f4, #e4e4e6 45%, #c4c4c8);
}

.thumb::after {
    content: "";
    width: 7px;
    height: 8px;
    background: repeating-linear-gradient(#555 0 1px, transparent 1px 3px);
}

.hscroll .thumb::after {
    width: 8px;
    height: 7px;
    background: repeating-linear-gradient(90deg, #555 0 1px, transparent 1px 3px);
}

.thumb.full {
    flex: 1;
}

.vscroll .thumb.small {
    height: 15px;
}

.vscroll .thumb.small::after {
    display: none;
}

.hscroll .thumb.small {
    width: 23px;
}

.after {
    flex: 1;
}

/* Stage */
.stage-area {
    display: grid;
    grid-template-columns: 1fr 17px;
    grid-template-rows: 1fr 18px;
    flex: 1;
    min-height: 0;
}

.pasteboard {
    min-width: 0;
    padding: 39px 0 0 255px;
    background: #d0d0d0;
    overflow: hidden;
}

.stage {
    width: 550px;
    height: 400px;
    background: #fff;
}

.stage-v {
    padding-right: 1px;
    border-left: 1px solid #fff;
}

.stage-v .thumb {
    flex: 114;
}

.stage-v .before,
.stage-v .after {
    flex: 166;
}

.stage-h {
    border-top: 1px solid #fff;
    padding-right: 17px;
    grid-column: 1 / 3;
}

.stage-h .thumb {
    flex: 546;
}

.stage-h .before,
.stage-h .after {
    flex: 241;
}

.bottom-gutter {
    display: flex;
    justify-content: center;
    flex: none;
    height: 6px;
    background: #bbb;
}

.bottom-gutter button {
    display: flex;
    align-items: center;
    justify-content: center;
    width: 48px;
    height: 6px;
    background: #f0f0f0;
}

.splitter {
    display: flex;
    align-items: center;
    flex: none;
    width: 6px;
    padding-bottom: 2px;
    background: linear-gradient(90deg, #808080, #a0a0a0 50%, #707070);
}

.splitter button {
    display: flex;
    align-items: center;
    width: 6px;
    height: 50px;
    border: 1px solid #666;
    border-width: 1px 0;
    background: #bcbcbc;
}

.splitter svg {
    margin-left: 1px;
    fill: #fff;
}

/* Panels */
.panels {
    display: flex;
    flex-direction: column;
    flex: none;
    width: 208px;
    background: #efefef;
}

.panel-head {
    display: flex;
    align-items: center;
    flex: none;
    height: 20px;
    padding: 0 5px 0 15px;
    border-top: 1px solid #bbb;
    border-bottom: 2px solid #999;
    background: linear-gradient(#000 60%, #3a3a3a);
    color: #fff;
    font-size: 11px;
}

.panel-head svg {
    margin-right: 6px;
    fill: #fff;
}

.panel-head.open {
    border-bottom: none;
    padding-left: 14px;
    font-size: 10px;
    font-weight: bold;
}

.panel-head.open button {
    display: flex;
    align-items: center;
}

.panel-head.open button svg {
    margin-right: 4px;
}

.panel-head .head-menu {
    margin: 0 0 0 auto;
    color: #ccc;
}

.library-pick {
    display: flex;
    align-items: center;
    gap: 13px;
    flex: none;
    height: 30px;
    padding: 1px 7px 0 4px;
    border-bottom: 1px solid #aaa;
}

.pick-box {
    flex: 1;
    height: 21px;
    margin-right: -6px;
    border: 1px solid #777;
    border-radius: 3px;
    background: linear-gradient(#f4f4f4 50%, #dcdcdc);
    font-size: 11px;
}

.pick-box select {
    padding-left: 2px;
}

.item-count {
    flex: none;
    height: 19px;
    padding-left: 5px;
    border-bottom: 1px solid #fff;
    line-height: 18px;
}

.preview {
    flex: none;
    height: 89px;
    margin-left: 1px;
    border: 1px solid #777;
    border-right-color: #fff;
    border-bottom-color: #fff;
    background: #c0c0c0;
}

.library {
    display: flex;
    flex: 1;
    min-height: 0;
    margin-top: 4px;
    background: #fff;
}

.library-list {
    flex: 1;
    min-width: 0;
    overflow: hidden;
}

table {
    width: 100%;
    table-layout: fixed;
    border-collapse: collapse;
}

th {
    height: 18px;
    padding: 0 4px;
    border-top: 1px solid #999;
    border-bottom: 1px solid #000;
    background: #efefef;
    font-weight: normal;
    text-align: left;
}

th.name {
    width: 150px;
    border-right: 1px solid #000;
}

td {
    height: 20px;
    padding: 0 0 0 10px;
    overflow: hidden;
    font-size: 13px;
    line-height: 18px;
}

td:first-child {
    display: flex;
    align-items: center;
    gap: 9px;
    padding: 0 0 0 2px;
}

.library-side {
    display: flex;
    flex-direction: column;
    flex: none;
    width: 15px;
    background: #efefef;
}

.side-button {
    display: flex;
    align-items: center;
    justify-content: center;
    flex: none;
    height: 17px;
    border-bottom: 1px solid #aaa;
    border-right: 1px solid #aaa;
}

.library-foot {
    display: flex;
    align-items: center;
    flex: none;
    gap: 3px;
    height: 18px;
    margin-right: 15px;
    padding-left: 2px;
}

.library-foot .delete {
    margin: 0 0 0 18px;
    color: #999;
}

.library-foot .hscroll {
    height: 16px;
    margin-left: -2px;
}

.taskbar {
    flex: none;
    height: 2px;
    border-top: 1px solid #333c48;
    background: linear-gradient(90deg,
        #8ca4b4 60px, #111 60px 118px,
        #8ca4b4 118px 183px, #111 183px 242px,
        #8ca4b4 242px 308px, #111 308px 366px,
        #8ca4b4 366px 556px, #111 556px 675px, #8ca4b4 675px);
}

/* Context menu */
.context-menu {
    position: absolute;
    z-index: 1;
    left: 462px;
    top: 140px;
    display: flex;
    flex-direction: column;
    width: 236px;
    padding: 2px;
    border: 1px solid #8c8c8c;
    background: linear-gradient(90deg, transparent 28px, #e0e0e0 28px 29px, #fcfcfc 29px 30px, transparent 30px) #f0f0f0;
    box-shadow: 2px 2px 2px rgba(0, 0, 0, 0.55);
    font-family: Roboto, sans-serif;
}

.context-menu button {
    height: 22px;
    padding-left: 31px;
    border: 1px solid transparent;
    border-radius: 2px;
    text-align: left;
    line-height: 20px;
}

.context-menu button:disabled {
    color: #777;
}

.context-menu .hover {
    border-color: #aecff7;
    background: linear-gradient(#f0f3f8, #e6edf5);
}

.context-menu hr {
    width: 201px;
    height: 2px;
    margin: 3px 0 3px auto;
    border: none;
    border-top: 1px solid #e0e0e0;
    background: #fff;
}

.cursor {
    position: absolute;
    z-index: 2;
    left: 545px;
    top: 240px;
}
```
